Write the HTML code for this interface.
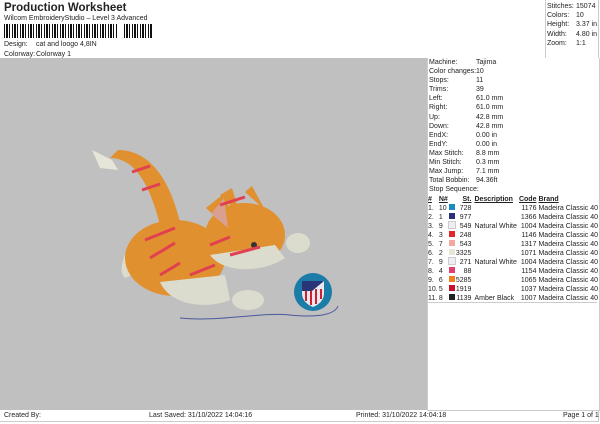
<!DOCTYPE html><html><head><style>
body{margin:0;width:600px;height:424px;background:#fff;font-family:"Liberation Sans",sans-serif;font-size:7px;color:#222;position:relative;overflow:hidden}
.a{position:absolute;white-space:nowrap;line-height:9px}
table{border-collapse:collapse}
td{padding:0;line-height:9px;height:9px;white-space:nowrap;font-size:7px}
</style></head><body>
<div class="a" style="left:4px;top:1px;font-size:11.5px;font-weight:bold;line-height:14px">Production Worksheet</div>
<div class="a" style="left:4px;top:14px">Wilcom EmbroideryStudio – Level 3 Advanced</div>
<div class="a" style="left:4px;top:24px;width:148px;height:14px;background:repeating-linear-gradient(90deg,#111 0 1px,#fff 1px 2px,#111 2px 4px,#fff 4px 5px,#111 5px 6px,#fff 6px 8px)"></div>
<div class="a" style="left:118px;top:24px;width:4px;height:14px;background:#fff"></div>
<div class="a" style="left:4px;top:40px">Design:</div><div class="a" style="left:36px;top:40px">cat and loogo 4,8IN</div>
<div class="a" style="left:4px;top:50px">Colorway:</div><div class="a" style="left:36px;top:50px">Colorway 1</div>
<div class="a" style="left:0;top:0;width:598px;height:58px;border-right:1px solid #ccc"></div>
<div class="a" style="left:545px;top:0;width:1px;height:58px;background:#ccc"></div>
<div class="a" style="left:547px;top:2px;line-height:9.2px">Stitches:<br>Colors:<br>Height:<br>Width:<br>Zoom:</div>
<div class="a" style="left:576px;top:2px;line-height:9.2px">15074<br>10<br>3.37 in<br>4.80 in<br>1:1</div>
<div class="a" style="left:0;top:58px;width:427px;height:352px;background:#c0c0c0"></div>
<div class="a" style="left:427px;top:58px;width:171px;height:352px;border:1px solid #ccc;border-top:none;background:#fff"></div>
<div class="a" style="left:428px;top:58px;width:169px;height:244px;border-bottom:1px solid #ccc"></div>
<div class="a" style="left:429px;top:58px;line-height:9.1px">Machine:<br>Color changes:<br>Stops:<br>Trims:<br>Left:<br>Right:<br>Up:<br>Down:<br>EndX:<br>EndY:<br>Max Stitch:<br>Min Stitch:<br>Max Jump:<br>Total Bobbin:<br>Stop Sequence:</div>
<div class="a" style="left:476px;top:58px;line-height:9.1px">Tajima<br>10<br>11<br>39<br>61.0 mm<br>61.0 mm<br>42.8 mm<br>42.8 mm<br>0.00 in<br>0.00 in<br>8.8 mm<br>0.3 mm<br>7.1 mm<br>94.36ft</div>
<table class="a" style="left:428px;top:195px;width:170px">
<tr style="font-weight:bold;text-decoration:underline"><td style="width:12px">#</td><td style="width:11px">N#</td><td style="width:8px"></td><td style="width:14px;text-align:right">St.</td><td style="padding-left:3px;width:46px">Description</td><td style="text-align:right;width:18px">Code</td><td style="padding-left:2px">Brand</td></tr>
<tr><td>1.</td><td>10</td><td><i style="display:inline-block;width:6px;height:6px;background:#1a8cc4"></i></td><td align=right>728</td><td></td><td align=right>1176</td><td style="padding-left:2px">Madeira Classic 40</td></tr>
<tr><td>2.</td><td>1</td><td><i style="display:inline-block;width:6px;height:6px;background:#2a2f7a"></i></td><td align=right>977</td><td></td><td align=right>1366</td><td style="padding-left:2px">Madeira Classic 40</td></tr>
<tr><td>3.</td><td>9</td><td><i style="display:inline-block;width:6px;height:6px;background:#eceef4;outline:1px solid #ccc"></i></td><td align=right>549</td><td style="padding-left:3px">Natural White</td><td align=right>1004</td><td style="padding-left:2px">Madeira Classic 40</td></tr>
<tr><td>4.</td><td>3</td><td><i style="display:inline-block;width:6px;height:6px;background:#e02a2a"></i></td><td align=right>248</td><td></td><td align=right>1146</td><td style="padding-left:2px">Madeira Classic 40</td></tr>
<tr><td>5.</td><td>7</td><td><i style="display:inline-block;width:6px;height:6px;background:#f0a8a0"></i></td><td align=right>543</td><td></td><td align=right>1317</td><td style="padding-left:2px">Madeira Classic 40</td></tr>
<tr><td>6.</td><td>2</td><td><i style="display:inline-block;width:6px;height:6px;background:#e8e6d8"></i></td><td align=right>3325</td><td></td><td align=right>1071</td><td style="padding-left:2px">Madeira Classic 40</td></tr>
<tr><td>7.</td><td>9</td><td><i style="display:inline-block;width:6px;height:6px;background:#eceef4;outline:1px solid #ccc"></i></td><td align=right>271</td><td style="padding-left:3px">Natural White</td><td align=right>1004</td><td style="padding-left:2px">Madeira Classic 40</td></tr>
<tr><td>8.</td><td>4</td><td><i style="display:inline-block;width:6px;height:6px;background:#e04070"></i></td><td align=right>88</td><td></td><td align=right>1154</td><td style="padding-left:2px">Madeira Classic 40</td></tr>
<tr><td>9.</td><td>6</td><td><i style="display:inline-block;width:6px;height:6px;background:#f08020"></i></td><td align=right>5285</td><td></td><td align=right>1065</td><td style="padding-left:2px">Madeira Classic 40</td></tr>
<tr><td>10.</td><td>5</td><td><i style="display:inline-block;width:6px;height:6px;background:#c8102a"></i></td><td align=right>1919</td><td></td><td align=right>1037</td><td style="padding-left:2px">Madeira Classic 40</td></tr>
<tr><td>11.</td><td>8</td><td><i style="display:inline-block;width:6px;height:6px;background:#222"></i></td><td align=right>1139</td><td style="padding-left:3px">Amber Black</td><td align=right>1007</td><td style="padding-left:2px">Madeira Classic 40</td></tr>
</table>
<svg class="a" style="left:0;top:0" width="427" height="410">
<path d="M180 318 C220 322 260 312 290 315 C320 318 335 314 338 306" stroke="#4a5a9a" fill="none" stroke-width="1"/>
<path d="M92 150 L112 160 L118 170 L100 168 Z" fill="#e6e6d8"/>
<path d="M110 158 C135 158 150 185 160 225 L180 222 C170 180 150 150 118 150 Z" fill="#e0902e"/>
<path d="M135 238 C122 255 118 272 125 278 L145 270 Z" fill="#dcdcce"/>
<ellipse cx="175" cy="258" rx="50" ry="38" fill="#e0902e"/>
<path d="M160 282 C170 305 205 310 230 300 L225 275 Z" fill="#dcdcce"/>
<path d="M220 195 L232 188 L240 215 Z" fill="#e0902e"/>
<path d="M245 192 L252 186 L265 210 Z" fill="#e0902e"/>
<ellipse cx="245" cy="235" rx="40" ry="32" fill="#e0902e"/>
<path d="M206 208 L226 192 L232 232 Z" fill="#e0902e"/><path d="M211 214 L224 198 L228 228 Z" fill="#d9a090"/>
<path d="M210 255 C225 275 265 272 285 258 L275 245 Z" fill="#dcdcce"/>
<ellipse cx="298" cy="243" rx="12" ry="10" fill="#dcdcce"/>
<ellipse cx="248" cy="300" rx="16" ry="10" fill="#dcdcce"/>
<circle cx="254" cy="245" r="3" fill="#333"/>
<path d="M145 240 l30 -12 M150 258 l25 -15 M160 275 l20 -12 M220 205 l25 -8 M230 255 l30 -8 M210 245 l20 -8 M132 172 l18 -6 M142 190 l18 -6 M190 275 l25 -10" stroke="#e04050" stroke-width="3"/>
<circle cx="313" cy="292" r="19" fill="#1c7ca8"/>
<path d="M302 281 h22 v12 c0 8 -6 12 -11 14 c-5 -2 -11 -6 -11 -14 Z" fill="#e8e8ee"/>
<path d="M306 289 v12 M311 289 v16 M316 289 v15 M321 289 v10" stroke="#d02030" stroke-width="2"/>
<path d="M302 281 h22 l-12 10 h-10 Z" fill="#2a3578"/>
</svg>
<div class="a" style="left:0;top:410px;width:598px;height:11px;border:1px solid #ccc;border-left:none;border-top:none"></div>
<div class="a" style="left:4px;top:411px">Created By:</div>
<div class="a" style="left:149px;top:411px">Last Saved: 31/10/2022 14:04:16</div>
<div class="a" style="left:356px;top:411px">Printed: 31/10/2022 14:04:18</div>
<div class="a" style="left:563px;top:411px">Page 1 of 1</div>
</body></html>
